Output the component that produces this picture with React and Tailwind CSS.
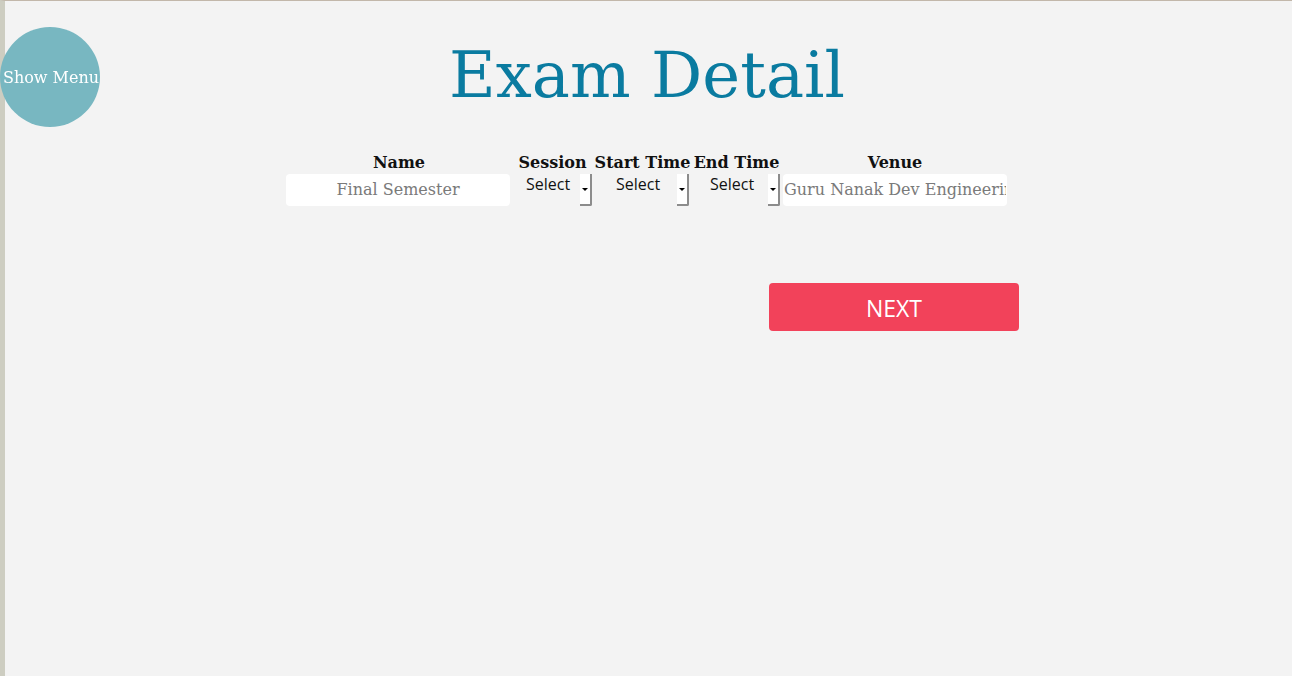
import React from "react";

const serif = { fontFamily: '"DejaVu Serif", "Liberation Serif", serif' };
const sans = { fontFamily: '"Open Sans", "Noto Sans", sans-serif' };

function SelectBox({ width, pl }) {
  return (
    <div className="flex h-[32px] items-start" style={{ width }}>
      <div className="flex-1 text-[16px] leading-[22px] text-[#111] -mt-[1px]" style={{ ...sans, paddingLeft: pl }}>
        Select
      </div>
      <div className="relative h-[32px] w-[12px] bg-white border-r-2 border-b-2 border-r-[#8c8c8c] border-b-[#8c8c8c] rounded-br-[2px] flex items-center justify-center">
        <span className="block w-0 h-0 border-l-[3px] border-r-[3px] border-t-[3px] border-l-transparent border-r-transparent border-t-black mt-[1px] -ml-[1px]" />
      </div>
    </div>
  );
}

function Label({ children }) {
  return (
    <div className="h-[19px] leading-[19px] text-[16px] font-bold text-[#111] text-center whitespace-nowrap mb-[2px]" style={serif}>
      {children}
    </div>
  );
}

export default function App() {
  return (
    <div className="relative min-h-[676px] bg-[#f3f3f3] border-t border-t-[#c2b7aa] border-l-[5px] border-l-[#cdcdc1]">
      <button
        className="fixed left-0 top-[27px] w-[100px] h-[100px] rounded-full bg-[#78b7c1] text-white text-[16px] flex items-center justify-center whitespace-nowrap p-0 pl-[2px] pt-[2px]"
        style={serif}
      >
        Show Menu
      </button>

      <h1 className="mt-[38px] text-center text-[64px] leading-[72px] text-[#0a7ba0] -ml-[3px]" style={serif}>
        Exam Detail
      </h1>

      <div className="mt-[42px] flex justify-center">
        <div className="flex ml-[-2px]">
          <div className="w-[226px]">
            <Label>Name</Label>
            <input
              className="w-[224px] h-[32px] bg-white rounded-[4px] text-center text-[16px] outline-none placeholder:text-[#7a7a7a] pb-[2px]"
              style={serif}
              placeholder="Final Semester"
            />
          </div>
          <div className="w-[81px] flex flex-col items-center">
            <Label>Session</Label>
            <div className="self-start ml-[2px]"><SelectBox width={78} pl={12} /></div>
          </div>
          <div className="w-[99px] flex flex-col items-center">
            <Label>Start Time</Label>
            <div className="self-start ml-[2px]"><SelectBox width={94} pl={21} /></div>
          </div>
          <div className="w-[89px] flex flex-col items-center">
            <Label>End Time</Label>
            <div className="self-start ml-[2px]"><SelectBox width={86} pl={16} /></div>
          </div>
          <div className="w-[228px] flex flex-col items-center">
            <Label>Venue</Label>
            <input
              className="self-start ml-[2px] w-[224px] h-[32px] bg-white rounded-[4px] text-left px-[1px] pb-[2px] text-[16px] outline-none placeholder:text-[#7a7a7a]"
              style={serif}
              placeholder="Guru Nanak Dev Engineering College"
            />
          </div>
        </div>
      </div>

      <div className="mt-[77px] flex">
        <button
          className="ml-[764px] w-[250px] h-[48px] rounded-[4px] bg-[#f2425a] text-white text-[23px] leading-none flex items-center justify-center pt-[2px]"
          style={sans}
        >
          NEXT
        </button>
      </div>
    </div>
  );
}
